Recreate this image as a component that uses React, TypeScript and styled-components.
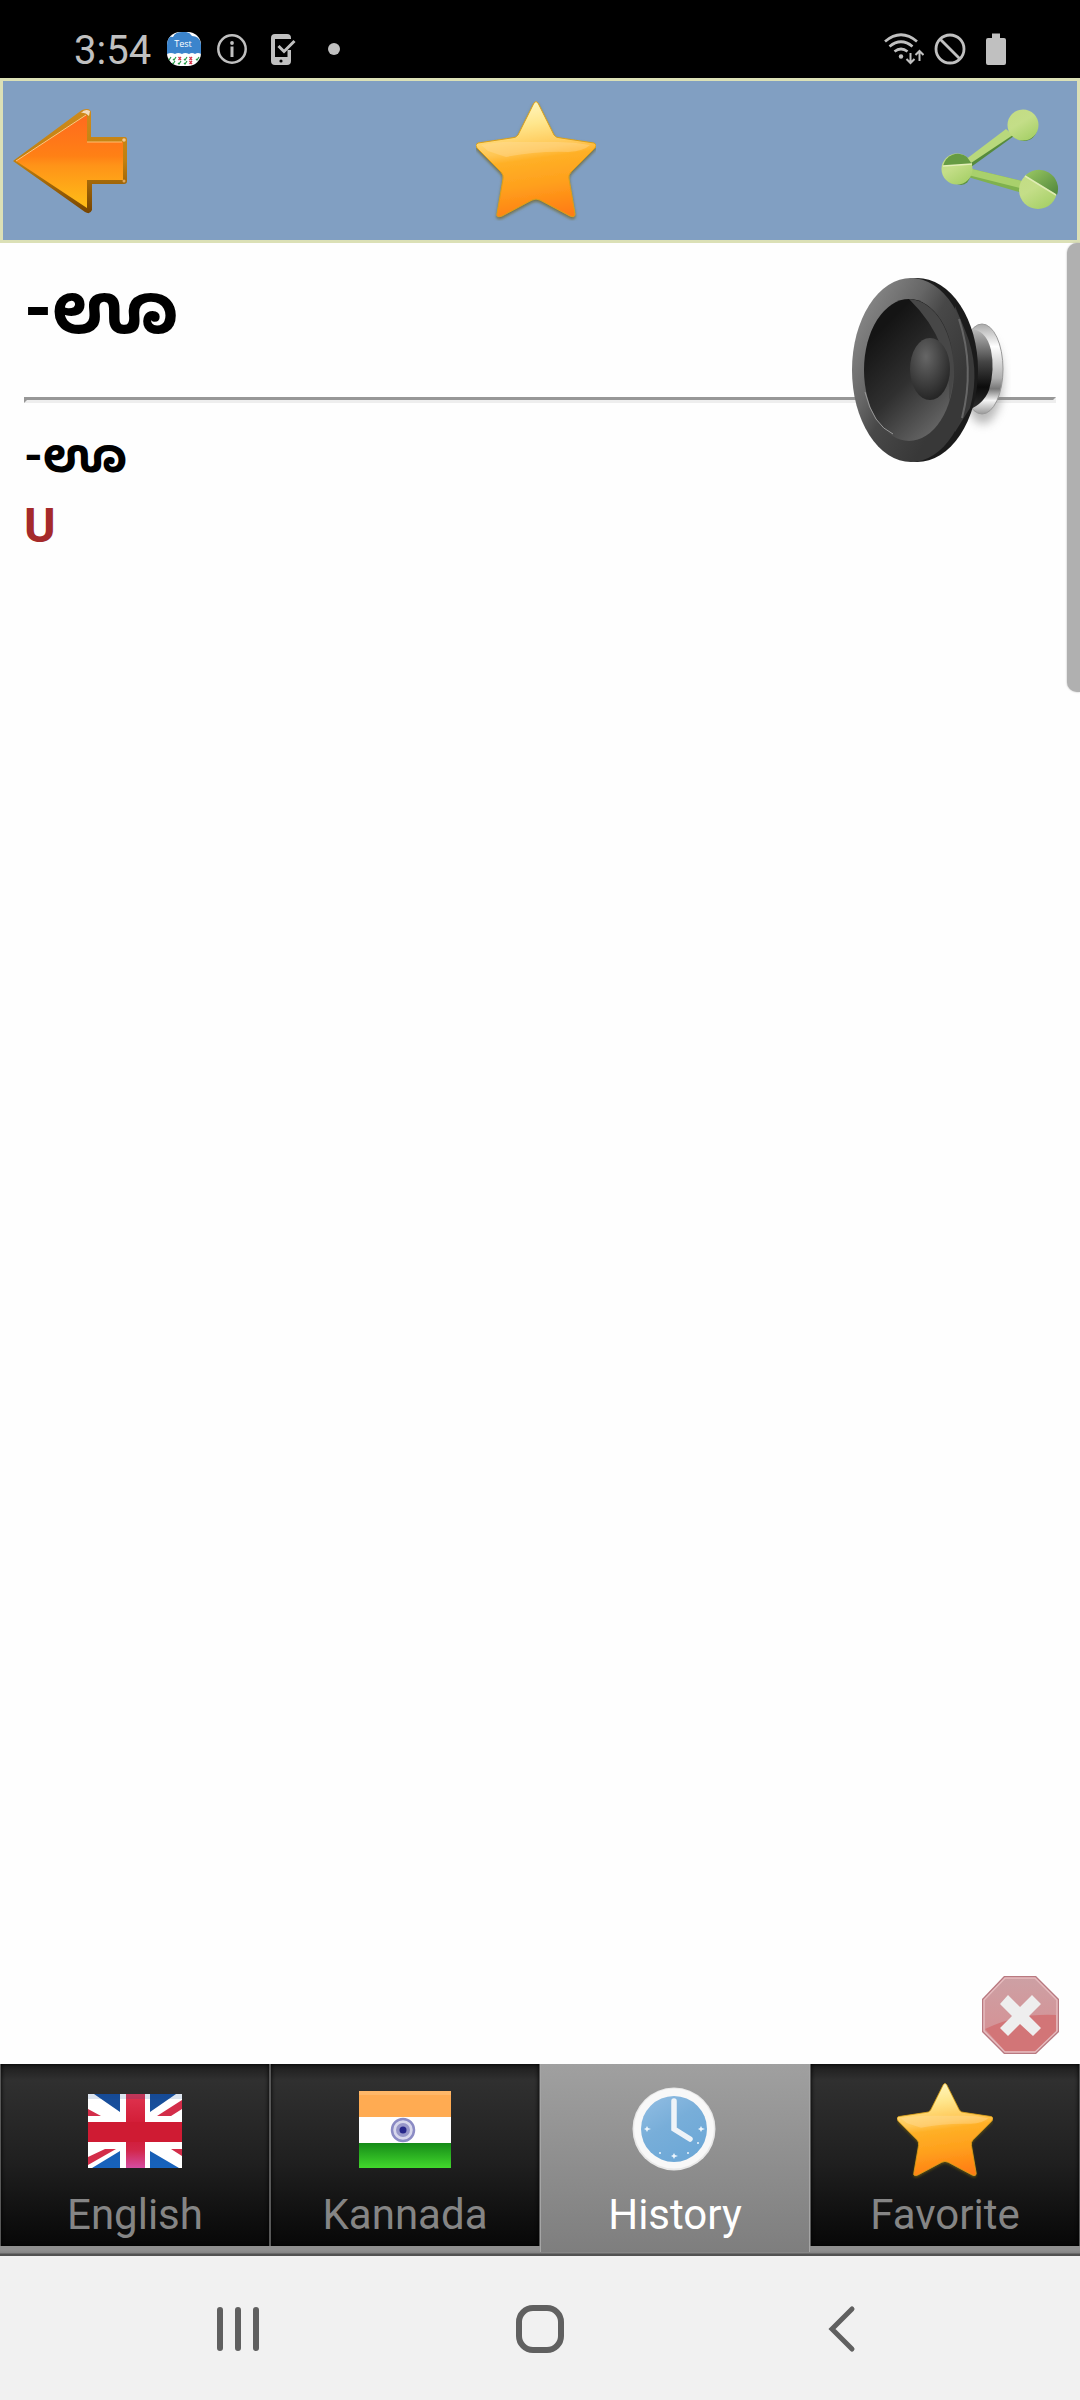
import React from "react";
import styled, { createGlobalStyle } from "styled-components";

const GlobalStyle = createGlobalStyle`
  *, *::before, *::after { box-sizing: border-box; }
  body { margin: 0; background: #fefefe; font-family: Roboto, "Noto Sans Kannada", "Noto Sans", sans-serif; }
  button { appearance: none; border: 0; padding: 0; margin: 0; background: none; font: inherit; color: inherit; cursor: pointer; }
  svg { display: block; flex: none; }
`;

const Screen = styled.div`
  display: flex;
  flex-direction: column;
  min-height: 100vh;
`;

const StatusBar = styled.header`
  display: flex;
  align-items: center;
  justify-content: space-between;
  height: 78px;
  padding: 20px 74px 0 74px;
  background: #000;
  color: #c0c0c0;
`;

const StatusGroup = styled.div<{ $gap: number }>`
  display: flex;
  align-items: center;
  gap: ${(p) => p.$gap}px;
`;

const Clock = styled.time`
  padding-top: 4px;
  font-size: 40px;
  line-height: 54px;
`;

const Toolbar = styled.nav`
  display: flex;
  align-items: center;
  justify-content: space-between;
  height: 165px;
  padding: 0 17px 0 9px;
  border: 3px solid #dbe0b6;
  background: #819fc2;
`;

const Content = styled.main`
  position: relative;
  flex: 1;
  padding: 24px 24px 0;
  font-weight: 700;
  color: #000;
`;

const Headword = styled.h1`
  margin: 0 0 46px;
  font-size: 72px;
  line-height: 84px;
`;

const Divider = styled.hr`
  height: 6px;
  margin: 0 0 18px;
  border: 3px solid;
  border-color: #979797 #eee #eee #979797;
`;

const Entry = styled.p<{ $color: string }>`
  margin: 0;
  font-size: 48px;
  line-height: 70px;
  color: ${(p) => p.$color};
`;

const SpeakerButton = styled.button`
  position: absolute;
  top: 33px;
  right: 69px;
`;

const CloseButton = styled.button`
  position: absolute;
  right: 20px;
  bottom: 9px;
`;

const ScrollThumb = styled.div`
  position: absolute;
  top: 0;
  right: 0;
  width: 13px;
  height: 449px;
  border-radius: 10px 0 0 10px;
  background: #b0b0b0;
  box-shadow: 0 0 2px #b0b0b0;
`;

const TabBar = styled.nav`
  display: grid;
  grid-template-columns: repeat(4, 1fr);
  height: 192px;
  background: linear-gradient(#8f8f8f, #8f8f8f 186px, #858585 189px, #525252 190px);
`;

const Tab = styled.button<{ $active?: boolean }>`
  display: flex;
  flex-direction: column;
  align-items: center;
  height: ${(p) => (p.$active ? 188 : 182)}px;
  padding-top: 19px;
  border: solid ${(p) => (p.$active ? "#a5a5a5" : "#585858")};
  border-width: 0 1px;
  background: ${(p) =>
    p.$active ? "linear-gradient(#a0a0a0, #7e7e7e)" : "linear-gradient(#1c1c1c, #303030 16px, #1f1f1f 100px, #070707)"};
  box-shadow: ${(p) => (p.$active ? "none" : "inset 0 0 4px #000")};
  color: ${(p) => (p.$active ? "#fff" : "#858585")};
`;

const TabLabel = styled.span`
  margin-top: 12px;
  font-size: 42px;
  line-height: 48px;
`;

const SystemNav = styled.footer`
  display: flex;
  height: 144px;
  padding: 2px 87px 0;
  background: #f1f1f1;
`;

const SystemButton = styled.button`
  display: flex;
  flex: 1;
  align-items: center;
  justify-content: center;
`;

const AppBadge = () => (
  <svg width="34" height="34" viewBox="0 0 34 34">
    <defs>
      <clipPath id="badge"><rect width="34" height="34" rx="13" /></clipPath>
    </defs>
    <g clipPath="url(#badge)">
      <rect width="34" height="34" fill="#fff" />
      <path d="M0 22V8Q2 4 6 5Q8 0 15 0Q22 -1 25 4Q32 4 34 11V22Q31 20 28 22Q25 20 22 22Q18 20 15 22Q11 20 8 22Q4 20 0 22Z" fill="#3b84cc" />
      <text x="16" y="15" textAnchor="middle" fontFamily="Open Sans, sans-serif" fontSize="9" fill="#fff">Test</text>
      <path d="M1 27l1 1 2-3M6 27l1 1 2-3M17 27l1 1 2-3M29 27l1 1 2-3M5 31l1 1 2-3M11 31l1 1 2-3M17 31l1 1 2-3M29 31l1 1 2-3" fill="none" stroke="#2c9c4b" strokeWidth="1.2" />
      <path d="M11.500 25l2.500 3m0-3l-2.500 3M22.500 25l2.500 3m0-3l-2.500 3M22.500 29l2.500 3m0-3l-2.500 3" stroke="#d9364b" strokeWidth="1.3" />
    </g>
  </svg>
);

const InfoIcon = () => (
  <svg width="30" height="30" viewBox="0 0 30 30">
    <circle cx="15" cy="15" r="13.700" fill="none" stroke="#c0c0c0" strokeWidth="2.500" />
    <circle cx="15" cy="9" r="1.900" fill="#c0c0c0" />
    <rect x="13.500" y="12.500" width="3" height="10.500" fill="#c0c0c0" />
  </svg>
);

const PhoneCheckIcon = () => (
  <svg width="25" height="31" viewBox="0 0 25 31">
    <path d="M4 0H16Q20 0 20 4V5H4V23H20V18L20 27Q20 31 16 31H4Q0 31 0 27V4Q0 0 4 0Z" fill="#c0c0c0" />
    <rect x="16.500" y="16" width="3.500" height="9" fill="#c0c0c0" />
    <path d="M7.500 12L13 17.500L23.500 7" fill="none" stroke="#c0c0c0" strokeWidth="3" />
    <circle cx="10" cy="27" r="1.600" fill="#000" />
  </svg>
);

const DotIcon = () => (
  <svg width="12" height="12"><circle cx="6" cy="6" r="6" fill="#c0c0c0" /></svg>
);

const WifiIcon = () => (
  <svg width="40" height="32" viewBox="0 0 40 32" fill="none" stroke="#c0c0c0" strokeWidth="2.700">
    <path d="M1 8.500Q17 -5 33 8.500M5.500 13.500Q17 4 28.500 13.500M10.500 18.500Q17 13.500 23.500 18.500" />
    <circle cx="17" cy="23.500" r="2.200" fill="#c0c0c0" stroke="none" />
    <path d="M26.500 20V30M22.500 26l4 4 4-4M35.500 28V18M31.500 22l4-4 4 4" strokeWidth="2" />
  </svg>
);

const BlockedIcon = () => (
  <svg width="32" height="32" viewBox="0 0 32 32" fill="none" stroke="#c0c0c0" strokeWidth="2.800">
    <circle cx="16" cy="16" r="14" />
    <path d="M6 6L26 26" />
  </svg>
);

const BatteryIcon = () => (
  <svg width="20" height="32" viewBox="0 0 20 32">
    <path d="M6 0.500H14V5H18Q20 5 20 7V30Q20 32 18 32H2Q0 32 0 30V7Q0 5 2 5H6Z" fill="#c0c0c0" />
  </svg>
);

const BackArrow = () => (
  <svg width="120" height="120" viewBox="0 0 120 120">
    <defs>
      <linearGradient id="arrowFill" x1="0" y1="0" x2="0" y2="1">
        <stop offset="0" stopColor="#ff6a1e" />
        <stop offset="0.440" stopColor="#ff8015" />
        <stop offset="0.540" stopColor="#ff9318" />
        <stop offset="1" stopColor="#ffbe17" />
      </linearGradient>
      <linearGradient id="arrowEdge" x1="0" y1="0" x2="0" y2="1">
        <stop offset="0" stopColor="#cf8b1c" />
        <stop offset="0.500" stopColor="#c0800f" />
        <stop offset="1" stopColor="#774400" />
      </linearGradient>
    </defs>
    <path d="M1 60L70 9Q78 6 79 11V36H113Q115 36 115 39V80Q115 83 112 83H80V109Q78 114 73 111Z" fill="url(#arrowEdge)" />
    <path d="M4 60L75 14V41H111V79H75V107Z" fill="url(#arrowFill)" />
    <path d="M4 60L74 14" stroke="#ffc584" strokeWidth="1" />
    <path d="M75 41H110" stroke="#ffc070" strokeWidth="1" />
    <path d="M69 12Q73 7 78 10L77 15Q73 11 69 12Z" fill="#f3dcc0" />
    <circle cx="112" cy="39" r="1.800" fill="#f1c98f" />
    <circle cx="112" cy="80" r="1.500" fill="#dfa75c" />
  </svg>
);

const StarIcon = ({ size, id }: { size: number; id: string }) => (
  <svg width={size} height={size} viewBox="0 0 120 120">
    <defs>
      <linearGradient id={id} x1="0.400" y1="0" x2="0.550" y2="1">
        <stop offset="0" stopColor="#fff6c0" />
        <stop offset="0.200" stopColor="#ffe68c" />
        <stop offset="0.420" stopColor="#ffc552" />
        <stop offset="0.500" stopColor="#ffb026" />
        <stop offset="0.720" stopColor="#ffa01d" />
        <stop offset="1" stopColor="#ff7d12" />
      </linearGradient>
      <filter id={`${id}-shadow`} x="-10%" y="-10%" width="120%" height="120%">
        <feDropShadow dx="0" dy="2" stdDeviation="1.500" floodColor="#6b5a10" floodOpacity="0.700" />
      </filter>
    </defs>
    <path
      d="M58 2Q60 -1 62 2L78 34Q80 37 85 37L118 42Q122 44 118 48L95 71Q92 74 93 78L99 113Q99 117 94 115L64 99Q60 97 56 99L26 115Q20 117 21 113L27 78Q28 74 25 71L2 48Q-2 44 2 42L35 37Q40 37 42 34Z"
      fill={`url(#${id})`} stroke="#dca017" strokeWidth="1" filter={`url(#${id}-shadow)`}
    />
    <path d="M5 44Q28 40 40 41L82 41Q98 41 114 44Q108 50 92 51Q60 50 30 56L12 50Z" fill="#ffdfa6" opacity="0.350" />
  </svg>
);

const ShareGlyph = () => (
  <svg width="120" height="120" viewBox="0 0 120 120">
    <defs>
      <linearGradient id="leaf" x1="0" y1="0" x2="0.600" y2="1">
        <stop offset="0" stopColor="#c3dc83" />
        <stop offset="0.500" stopColor="#c4de88" />
        <stop offset="1" stopColor="#a9d16a" />
      </linearGradient>
      <linearGradient id="leafDark" x1="0" y1="0" x2="1" y2="1">
        <stop offset="0" stopColor="#9bc963" />
        <stop offset="1" stopColor="#4f853b" />
      </linearGradient>
    </defs>
    <path d="M27 58L67 32L74 35L31 66Z" fill="#568b3c" />
    <path d="M25 59L66 28L73 34L31 62Z" fill="#b8d87c" />
    <path d="M28 67L82 80L79 91L28 76Z" fill="#7fb14e" />
    <path d="M28 67L82 80L80 87L28 74Z" fill="#a9d06c" />
    <ellipse cx="84" cy="27" rx="13" ry="13" fill="#568b3c" />
    <circle cx="83" cy="24" r="15.500" fill="url(#leaf)" />
    <circle cx="21" cy="75" r="9" fill="#5d9340" />
    <circle cx="17" cy="68" r="15.500" fill="url(#leaf)" />
    <path d="M3 65A15 15 0 0 1 27 56L32 63Z" fill="#669b43" />
    <path d="M3 65L32 63" stroke="#e4efb8" strokeWidth="1.500" />
    <circle cx="98" cy="89" r="19" fill="url(#leaf)" />
    <path d="M85 75A19 19 0 0 1 117 94Z" fill="url(#leafDark)" />
    <path d="M85 75L116 94" stroke="#e0ecb4" strokeWidth="1.500" />
  </svg>
);

const SpeakerGlyph = () => (
  <svg width="160" height="188" viewBox="0 0 160 188">
    <defs>
      <linearGradient id="rim" x1="0" y1="0.200" x2="0.700" y2="0.800">
        <stop offset="0" stopColor="#8a8a8a" />
        <stop offset="0.400" stopColor="#666" />
        <stop offset="0.600" stopColor="#484848" />
        <stop offset="1" stopColor="#383838" />
      </linearGradient>
      <linearGradient id="cone" x1="0.200" y1="0.200" x2="0.700" y2="1">
        <stop offset="0" stopColor="#141414" />
        <stop offset="0.500" stopColor="#303030" />
        <stop offset="1" stopColor="#666" />
      </linearGradient>
      <radialGradient id="dome" cx="0.400" cy="0.300" r="0.700">
        <stop offset="0" stopColor="#666" />
        <stop offset="1" stopColor="#262626" />
      </radialGradient>
      <linearGradient id="chrome" x1="0" y1="0" x2="0" y2="1">
        <stop offset="0" stopColor="#aaa" />
        <stop offset="0.250" stopColor="#fff" />
        <stop offset="0.600" stopColor="#b0b0b0" />
        <stop offset="0.720" stopColor="#777" />
        <stop offset="0.850" stopColor="#f4f4f4" />
        <stop offset="1" stopColor="#999" />
      </linearGradient>
      <linearGradient id="core" x1="0" y1="0" x2="0" y2="1">
        <stop offset="0" stopColor="#bbb" />
        <stop offset="0.400" stopColor="#444" />
        <stop offset="0.700" stopColor="#0c0c0c" />
        <stop offset="1" stopColor="#333" />
      </linearGradient>
      <filter id="soft" x="-50%" y="-50%" width="200%" height="200%"><feGaussianBlur stdDeviation="5" /></filter>
    </defs>
    <ellipse cx="132" cy="104" rx="20" ry="44" fill="#777" opacity="0.500" filter="url(#soft)" />
    <ellipse cx="131" cy="93" rx="21" ry="45" fill="url(#chrome)" stroke="#999" strokeWidth="1" />
    <path d="M110 54Q134 48 140 74Q144 94 138 114Q132 130 112 136Z" fill="url(#core)" />
    <ellipse cx="66" cy="94" rx="61" ry="92" fill="#1b1b1b" />
    <path d="M114 54Q130 92 119 132L104 156V30Z" fill="#3a3a3a" />
    <ellipse cx="60" cy="94" rx="59" ry="92" fill="url(#rim)" />
    <path d="M108 43Q124 92 111 142" fill="none" stroke="#666" strokeWidth="2" />
    <ellipse cx="58" cy="94" rx="45" ry="71" fill="url(#cone)" />
    <path d="M58 23A45 71 0 0 1 98 125Q102 66 58 23Z" fill="#474747" />
    <path d="M14 116Q22 149 42 158" fill="none" stroke="#999" strokeWidth="1" />
    <ellipse cx="79" cy="93" rx="20" ry="31" fill="url(#dome)" />
  </svg>
);

const CloseGlyph = () => (
  <svg width="80" height="80" viewBox="0 0 80 80">
    <defs>
      <linearGradient id="stop" x1="0" y1="0" x2="0" y2="1">
        <stop offset="0" stopColor="#cda0a4" />
        <stop offset="1" stopColor="#d88d90" />
      </linearGradient>
    </defs>
    <path d="M24 1H56L79 24V57L56 79H24L2 57V24Z" fill="#b87980" />
    <path d="M25 3H55L77 25V56L55 77H25L4 56V25Z" fill="url(#stop)" stroke="#e6bcbf" strokeWidth="1.500" />
    <path d="M5 54Q38 38 76 40V56L55 76H25Z" fill="#d27577" />
    <path d="M28 20L40 32L52 20L61 29L49 41L61 53L53 61L40 49L28 61L20 53L32 41L20 29Z" fill="#eee" />
  </svg>
);

const UkFlag = () => (
  <svg width="96" height="96" viewBox="0 0 96 96">
    <defs>
      <linearGradient id="ukBlue" x1="0" y1="0" x2="0" y2="1">
        <stop offset="0" stopColor="#174b96" />
        <stop offset="1" stopColor="#1763bd" />
      </linearGradient>
      <linearGradient id="ukRed" x1="0" y1="0" x2="0" y2="1">
        <stop offset="0" stopColor="#df3450" />
        <stop offset="0.500" stopColor="#cf1730" />
        <stop offset="0.750" stopColor="#d22547" />
        <stop offset="1" stopColor="#d44da2" />
      </linearGradient>
      <clipPath id="ukClip"><rect x="1" y="11" width="94" height="74" /></clipPath>
    </defs>
    <g clipPath="url(#ukClip)">
      <rect x="1" y="11" width="94" height="74" fill="#fff" />
      <path d="M7 11H33V29ZM63 11H89L63 29ZM5 85L33 68V85ZM63 68L92 85H63Z" fill="url(#ukBlue)" />
      <path d="M1 26L14 33H1ZM70 33L95 17V26L84 33ZM1 74L18 66H29L1 82ZM84 66H95V73Z" fill="#d32d49" />
      <rect x="39" y="11" width="19" height="74" fill="url(#ukRed)" />
      <rect x="1" y="39" width="94" height="20" fill="#cf1b33" />
      <rect x="1" y="11" width="94" height="5" fill="#174b96" opacity="0.150" />
    </g>
  </svg>
);

const IndiaFlag = () => (
  <svg width="96" height="96" viewBox="0 0 96 96">
    <defs>
      <linearGradient id="inGreen" x1="0" y1="0" x2="0" y2="1">
        <stop offset="0" stopColor="#158a18" />
        <stop offset="1" stopColor="#42d82c" />
      </linearGradient>
    </defs>
    <rect x="2" y="8" width="92" height="26" fill="#ffab52" />
    <rect x="2" y="8" width="92" height="4" fill="#ffb768" />
    <rect x="2" y="34" width="92" height="26" fill="#fff" />
    <rect x="2" y="60" width="92" height="25" fill="url(#inGreen)" />
    <circle cx="46" cy="47" r="11" fill="#d8d8ec" stroke="#8b8bc4" strokeWidth="2.500" />
    <circle cx="46" cy="47" r="7" fill="#9797c9" />
    <circle cx="46" cy="47" r="3.500" fill="#27278a" />
  </svg>
);

const HistoryClock = () => (
  <svg width="96" height="96" viewBox="0 0 96 96">
    <defs>
      <linearGradient id="dial" x1="0" y1="0" x2="0.600" y2="1">
        <stop offset="0" stopColor="#93bee3" />
        <stop offset="0.500" stopColor="#78aed9" />
        <stop offset="1" stopColor="#6da8d7" />
      </linearGradient>
    </defs>
    <circle cx="47" cy="46" r="41.500" fill="#e8e8e8" />
    <circle cx="47" cy="45.500" r="40" fill="#f8f8f8" />
    <circle cx="47" cy="46" r="33" fill="url(#dial)" />
    <path d="M47 18V46L63 56" fill="none" stroke="#eef3f8" strokeWidth="5.500" strokeLinecap="round" />
    <g fill="#edf6fd">
      <path d="M20 43l1 2 3 1-3 1-1 2-1-2-2-1 2-1z" />
      <path d="M74 43l1 2 3 1-3 1-1 2-1-2-2-1 2-1z" />
      <path d="M47 70l1 2 3 1-3 1-1 2-1-2-2-1 2-1z" />
      <circle cx="61" cy="70" r="1" /><circle cx="71" cy="60" r="1" /><circle cx="33" cy="70" r="1" />
    </g>
  </svg>
);

const tabs = [
  { label: "English", icon: <UkFlag /> },
  { label: "Kannada", icon: <IndiaFlag /> },
  { label: "History", icon: <HistoryClock />, active: true },
  { label: "Favorite", icon: <StarIcon size={96} id="favoriteStar" /> },
];

export default function App() {
  return (
    <Screen>
      <GlobalStyle />
      <StatusBar>
        <StatusGroup $gap={24}>
          <StatusGroup $gap={16}>
            <Clock>3:54</Clock>
            <AppBadge />
            <InfoIcon />
          </StatusGroup>
          <StatusGroup $gap={32}>
            <PhoneCheckIcon />
            <DotIcon />
          </StatusGroup>
        </StatusGroup>
        <StatusGroup $gap={10}>
          <WifiIcon />
          <StatusGroup $gap={20}>
            <BlockedIcon />
            <BatteryIcon />
          </StatusGroup>
        </StatusGroup>
      </StatusBar>
      <Toolbar>
        <button aria-label="Back"><BackArrow /></button>
        <button aria-label="Add to favorites"><StarIcon size={120} id="toolbarStar" /></button>
        <button aria-label="Share"><ShareGlyph /></button>
      </Toolbar>
      <Content>
        <Headword lang="kn">-ಊ</Headword>
        <Divider />
        <Entry $color="#000" lang="kn">-ಊ</Entry>
        <Entry $color="#a52a2a">U</Entry>
        <SpeakerButton aria-label="Listen"><SpeakerGlyph /></SpeakerButton>
        <CloseButton aria-label="Close"><CloseGlyph /></CloseButton>
        <ScrollThumb />
      </Content>
      <TabBar>
        {tabs.map((tab) => (
          <Tab key={tab.label} $active={tab.active}>
            {tab.icon}
            <TabLabel>{tab.label}</TabLabel>
          </Tab>
        ))}
      </TabBar>
      <SystemNav>
        <SystemButton aria-label="Recent apps">
          <svg width="48" height="48" viewBox="0 0 48 48" stroke="#606060" strokeWidth="6" strokeLinecap="round">
            <path d="M6 5V43M24 5V43M42 5V43" />
          </svg>
        </SystemButton>
        <SystemButton aria-label="Home">
          <svg width="48" height="48" viewBox="0 0 48 48">
            <rect x="3" y="3" width="42" height="42" rx="14" fill="none" stroke="#606060" strokeWidth="6" />
          </svg>
        </SystemButton>
        <SystemButton aria-label="Go back">
          <svg width="48" height="48" viewBox="0 0 48 48">
            <path d="M34 4L14 24L34 44" fill="none" stroke="#606060" strokeWidth="5" strokeLinecap="round" />
          </svg>
        </SystemButton>
      </SystemNav>
    </Screen>
  );
}
